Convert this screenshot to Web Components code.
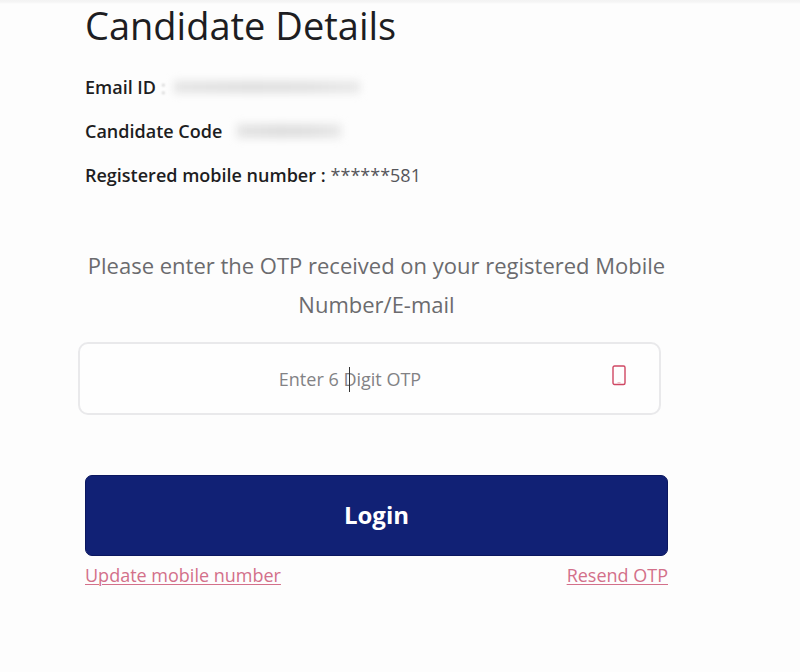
<!DOCTYPE html>
<html lang="en">
<head>
<meta charset="utf-8">
<meta name="viewport" content="width=device-width, initial-scale=1">
<title>Candidate Details</title>
<style>
  body { margin: 0; background: #fdfdfd; font-family: "Open Sans", "Noto Sans", sans-serif; color: #1d1d22; }
</style>
</head>
<body>
<otp-page>
  <candidate-details heading="Candidate Details">
    <detail-row label="Email ID"><redacted-value size="long" colon></redacted-value></detail-row>
    <detail-row label="Candidate Code"><redacted-value></redacted-value></detail-row>
    <detail-row label="Registered mobile number :">******581</detail-row>
  </candidate-details>
  <otp-form></otp-form>
</otp-page>

<script>
class Base extends HTMLElement {
  constructor() {
    super();
    this.attachShadow({ mode: "open" }).innerHTML = this.template();
  }
  template() { return ""; }
}

customElements.define("otp-page", class extends Base {
  template() {
    return `<style>
      :host { display: block; background: linear-gradient(#f3f3f3, #f5f5f5 2px, #fdfdfd 4px) top / 100% 4px no-repeat; }
      main { padding: 0 132px 24px 85px; }
    </style>
    <main><slot></slot></main>`;
  }
});

customElements.define("candidate-details", class extends Base {
  template() {
    return `<style>
      :host { display: block; }
      h1 { margin: 0 0 25px; font-size: 38px; line-height: 50px; font-weight: 400; }
      .rows { display: flex; flex-direction: column; gap: 20px; }
    </style>
    <h1></h1><div class="rows"><slot></slot></div>`;
  }
  connectedCallback() { this.shadowRoot.querySelector("h1").textContent = this.getAttribute("heading"); }
});

customElements.define("detail-row", class extends Base {
  template() {
    return `<style>
      :host { display: flex; align-items: center; gap: 5px; font-size: 18px; line-height: 24px; color: #55555a; }
      b { font-weight: 600; color: #1d1d22; }
    </style>
    <b></b><span><slot></slot></span>`;
  }
  connectedCallback() { this.shadowRoot.querySelector("b").textContent = this.getAttribute("label"); }
});

customElements.define("redacted-value", class extends Base {
  template() {
    return `<style>
      :host { display: flex; align-items: center; gap: 8px; }
      i { display: none; font-style: normal; color: #bbb; filter: blur(1px); }
      :host([colon]) i { display: block; }
      .smudge { width: 104px; height: 14px; margin-left: 10px; filter: blur(4px);
        background: linear-gradient(90deg, #e4e4e4, #dedede 40%, #e0e0e0 70%, #e8e8e8); }
      :host([size="long"]) .smudge { width: 186px; height: 12px; margin-left: 0; }
    </style>
    <i>:</i><div class="smudge" role="img" aria-label="Hidden value"></div>`;
  }
});

customElements.define("phone-icon", class extends Base {
  template() {
    return `<style>:host { display: block; } svg { display: block; }</style>
    <svg width="14" height="21" viewBox="0 0 14 21" fill="none" stroke="#cf4763" aria-hidden="true">
      <rect x="1" y="1" width="12" height="18.5" rx="1.5" stroke-width="1.4"/>
      <path d="M5.5 17.8H8.5" stroke="#e9a9b6" stroke-width="1"/>
    </svg>`;
  }
});

customElements.define("otp-field", class extends Base {
  template() {
    return `<style>
      :host { display: block; }
      .box { position: relative; display: flex; align-items: center; box-sizing: border-box; height: 73px;
        border: 2px solid #e9e9eb; border-radius: 10px; background: #fefefe; padding: 0 33px 0 32px; }
      input { flex: 1; min-width: 0; border: 0; outline: 0; padding: 0 24px 0 0; background: none; text-align: center;
        font: 400 18px/24px "Open Sans", "Noto Sans", sans-serif; color: #333; }
      input::placeholder { color: #828285; opacity: 1; }
      phone-icon { margin-bottom: 6px; }
      .caret { position: absolute; left: calc(50% - 21px); top: 23px; width: 1px; height: 25px; background: #333; }
    </style>
    <div class="box">
      <input type="text" inputmode="numeric" maxlength="6" placeholder="Enter 6 Digit OTP" aria-label="Enter 6 Digit OTP">
      <phone-icon></phone-icon>
      <span class="caret"></span>
    </div>`;
  }
});

customElements.define("otp-form", class extends Base {
  template() {
    return `<style>
      :host { display: block; margin-top: 59px; }
      form { display: flex; flex-direction: column; }
      p { margin: 0 0 18px; text-align: center; font-size: 22px; line-height: 39px; color: #6b6b6e; }
      otp-field { margin: 0 7px 60px -7px; }
      button { height: 81px; padding: 0 0 2px; border: 1px solid #0b175f; border-radius: 7px; background: #112175; color: #fff;
        font: 700 24px/32px "Open Sans", "Noto Sans", sans-serif; }
      nav { display: flex; justify-content: space-between; margin-top: 7px; font-size: 18px; line-height: 24px; }
      a { color: #d3708a; text-decoration: underline; text-underline-offset: 2px; text-decoration-thickness: 1px; }
    </style>
    <form>
      <p>Please enter the OTP received on your registered Mobile Number/E-mail</p>
      <otp-field></otp-field>
      <button type="button">Login</button>
      <nav><a href="#update">Update mobile number</a><a href="#resend">Resend OTP</a></nav>
    </form>`;
  }
});
</script>
</body>
</html>
